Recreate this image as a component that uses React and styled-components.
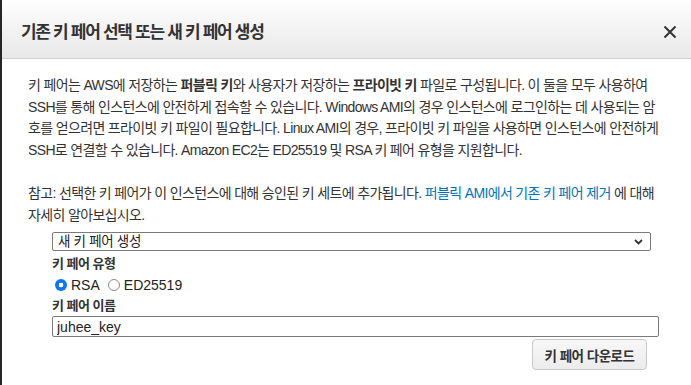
import React from "react";
import styled, { createGlobalStyle } from "styled-components";

const GlobalStyle = createGlobalStyle`
  html, body {
    margin: 0;
    padding: 0;
    background: #fff;
  }
  body {
    font-family: "Liberation Sans", "Noto Sans CJK KR", sans-serif;
    color: #333;
  }
`;

export default function App() {
  const [keyType, setKeyType] = React.useState("RSA");
  const [name, setName] = React.useState("juhee_key");

  return (
    <>
      <GlobalStyle />
      <Modal>
        <Header>
          <Title>기존 키 페어 선택 또는 새 키 페어 생성</Title>
          <CloseButton aria-label="닫기">
            <svg width="14" height="14" viewBox="0 0 14 14">
              <path d="M1.5 1.5 L12.5 12.5 M12.5 1.5 L1.5 12.5" stroke="#333" strokeWidth="2" fill="none" />
            </svg>
          </CloseButton>
        </Header>

        <Body>
          <Paragraph>
            <Line>키 페어는 AWS에 저장하는 <b>퍼블릭 키</b>와 사용자가 저장하는 <b>프라이빗 키</b> 파일로 구성됩니다. 이 둘을 모두 사용하여</Line>
            <Line>SSH를 통해 인스턴스에 안전하게 접속할 수 있습니다. Windows AMI의 경우 인스턴스에 로그인하는 데 사용되는 암</Line>
            <Line>호를 얻으려면 프라이빗 키 파일이 필요합니다. Linux AMI의 경우, 프라이빗 키 파일을 사용하면 인스턴스에 안전하게</Line>
            <Line>SSH로 연결할 수 있습니다. Amazon EC2는 ED25519 및 RSA 키 페어 유형을 지원합니다.</Line>
          </Paragraph>
          <Paragraph>
            <Line>참고: 선택한 키 페어가 이 인스턴스에 대해 승인된 키 세트에 추가됩니다. <Link>퍼블릭 AMI에서 기존 키 페어 제거</Link> 에 대해</Line>
            <Line>자세히 알아보십시오.</Line>
          </Paragraph>

          <Form>
            <SelectWrap>
              <Select defaultValue="new">
                <option value="new">새 키 페어 생성</option>
                <option value="existing">기존 키 페어 선택</option>
              </Select>
              <Chevron width="9" height="6" viewBox="0 0 9 6">
                <path d="M1 1 L4.5 4.5 L8 1" stroke="#333" strokeWidth="1.8" fill="none" />
              </Chevron>
            </SelectWrap>

            <FieldLabel $h={25} $lh={25}>키 페어 유형</FieldLabel>
            <RadioRow>
              {["RSA", "ED25519"].map((t) => (
                <RadioLabel key={t}>
                  <RadioInput
                    type="radio"
                    name="keytype"
                    checked={keyType === t}
                    onChange={() => setKeyType(t)}
                  />
                  {t}
                </RadioLabel>
              ))}
            </RadioRow>

            <FieldLabel $h={23} $lh={25}>키 페어 이름</FieldLabel>
            <TextInput value={name} onChange={(e) => setName(e.target.value)} />

            <Actions>
              <Button>키 페어 다운로드</Button>
            </Actions>
          </Form>
        </Body>
      </Modal>
    </>
  );
}

const Modal = styled.div`
  width: 689px;
  height: 385px;
  border-left: 2px solid #262626;
  background: #fff;
  overflow: hidden;
`;

const Header = styled.div`
  height: 59px;
  border-bottom: 1px solid #cfcfcf;
  background: linear-gradient(#fefefe, #e8e8e8);
  display: flex;
  align-items: center;
  justify-content: space-between;
  padding: 2px 14px 0 19px;
  box-sizing: border-box;
`;

const Title = styled.h1`
  margin: 0;
  font-size: 17px;
  font-weight: 700;
  letter-spacing: -1.3px;
  color: #333;
  font-family: "Liberation Sans", "Noto Sans CJK KR", sans-serif;
`;

const CloseButton = styled.button`
  border: 0;
  background: none;
  padding: 0;
  margin-top: 3px;
  width: 14px;
  height: 14px;
  display: flex;
  cursor: pointer;
`;

const Body = styled.div`
  padding: 16px 0 0 26px;
`;

const Paragraph = styled.p`
  margin: 0 0 21px;
  font-size: 14px;
  line-height: 21.7px;
  letter-spacing: -0.65px;
  color: #333;
  b {
    font-weight: 700;
  }
`;

const Line = styled.span`
  display: block;
  white-space: nowrap;
`;

const Link = styled.a`
  color: #0073bb;
  cursor: pointer;
`;

const Form = styled.div`
  margin: -15px 0 0 24px;
  width: 607px;
  display: flex;
  flex-direction: column;
`;

const SelectWrap = styled.div`
  position: relative;
  width: 599px;
  height: 19px;
`;

const Select = styled.select`
  appearance: none;
  width: 100%;
  height: 19px;
  box-sizing: border-box;
  border: 1px solid #7a7a7a;
  border-radius: 2px;
  background: #fff;
  padding: 0 20px 0 5px;
  font-family: "Liberation Sans", "Noto Sans CJK KR", sans-serif;
  font-size: 13.5px;
  letter-spacing: -0.3px;
  color: #222;
  outline: none;
`;

const Chevron = styled.svg`
  position: absolute;
  right: 8px;
  top: 7px;
  pointer-events: none;
`;

const FieldLabel = styled.div`
  font-size: 13px;
  font-weight: 700;
  letter-spacing: -0.5px;
  line-height: ${(p) => p.$lh}px;
  height: ${(p) => p.$h}px;
  color: #333;
`;

const RadioRow = styled.div`
  display: flex;
  align-items: center;
  gap: 5px;
  height: 17px;
`;

const RadioLabel = styled.label`
  display: flex;
  align-items: center;
  gap: 4px;
  font-family: "Liberation Sans", sans-serif;
  font-size: 14px;
  color: #222;
`;

const RadioInput = styled.input`
  appearance: none;
  margin: 0 0 0 3px;
  width: 12px;
  height: 12px;
  border-radius: 50%;
  border: 1px solid #8a8a8a;
  background: #fff;
  box-sizing: border-box;
  &:checked {
    border: 0;
    background: radial-gradient(circle, #fff 0 2.2px, #0a76f6 2.6px);
  }
`;

const TextInput = styled.input`
  width: 607px;
  height: 21px;
  box-sizing: border-box;
  border: 1px solid #7a7a7a;
  border-radius: 2px;
  padding: 0 4px;
  font-family: "Liberation Sans", sans-serif;
  font-size: 14px;
  color: #222;
  outline: none;
`;

const Actions = styled.div`
  display: flex;
  justify-content: flex-end;
  padding: 2px 12px 0 0;
`;

const Button = styled.button`
  height: 31px;
  width: 115px;
  border: 1px solid #c8c8c8;
  border-radius: 4px;
  background: linear-gradient(#f7f7f7, #ececec);
  font-family: "Liberation Sans", "Noto Sans CJK KR", sans-serif;
  font-size: 13.5px;
  font-weight: 700;
  letter-spacing: -0.5px;
  color: #333;
  cursor: pointer;
`;
